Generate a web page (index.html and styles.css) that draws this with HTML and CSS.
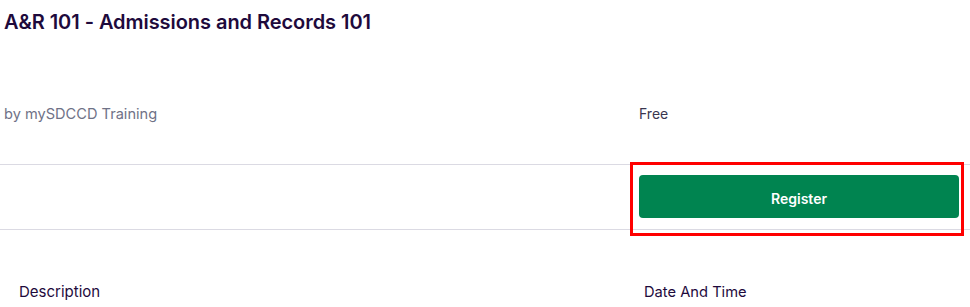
FILE: index.html
```html
<!DOCTYPE html>
<html>
<head>
<meta charset="utf-8">
<link rel="stylesheet" href="styles.css">
</head>
<body>
<div class="page">
  <h1 class="title">A&amp;R 101 - Admissions and Records 101</h1>
  <div class="row meta">
    <div class="left organizer">by mySDCCD Training</div>
    <div class="right price">Free</div>
  </div>
  <div class="row action">
    <div class="left"></div>
    <div class="right">
      <button class="register">Register</button>
    </div>
    <div class="highlight"></div>
  </div>
  <div class="row sections">
    <div class="left section-title desc">Description</div>
    <div class="right section-title date">Date And Time</div>
  </div>
</div>
</body>
</html>
```
FILE: styles.css
```css
html, body {
  margin: 0;
  padding: 0;
  background: #ffffff;
}
body {
  font-family: "Inter", "Roboto", "Liberation Sans", sans-serif;
  color: #1e0a3c;
}
.page {
  width: 970px;
}
.title {
  margin: 0;
  padding: 8px 0 0 4px;
  font-size: 20px;
  line-height: 28px;
  font-weight: 600;
  color: #1e0a3c;
  letter-spacing: -0.05px;
}
.row {
  display: grid;
  grid-template-columns: 639px 320px;
}
.meta {
  padding-top: 68px;
  height: 129px;
  box-sizing: border-box;
  border-bottom: 1px solid #dbdae3;
}
.organizer {
  padding-left: 4px;
  font-size: 14.6px;
  line-height: 20px;
  color: #6f7287;
}
.price {
  font-size: 14px;
  line-height: 20px;
  color: #39364f;
}
.action {
  position: relative;
  height: 65px;
  box-sizing: border-box;
  border-bottom: 1px solid #dbdae3;
  padding-top: 10px;
}
.register {
  display: block;
  width: 320px;
  height: 43px;
  padding: 3px 0 0;
  border: none;
  border-radius: 4px;
  background: #008450;
  color: #ffffff;
  font-family: inherit;
  font-size: 14px;
  font-weight: 600;
  cursor: pointer;
}
.highlight {
  position: absolute;
  left: 630px;
  top: -3px;
  width: 334px;
  height: 74px;
  box-sizing: border-box;
  border: 3px solid #ff0000;
  pointer-events: none;
}
.sections {
  padding-top: 52px;
}
.section-title {
  font-size: 15px;
  line-height: 20px;
  color: #1e0a3c;
}
.desc {
  padding-left: 19px;
}
.date {
  padding-left: 5px;
  font-size: 14.7px;
}
```
